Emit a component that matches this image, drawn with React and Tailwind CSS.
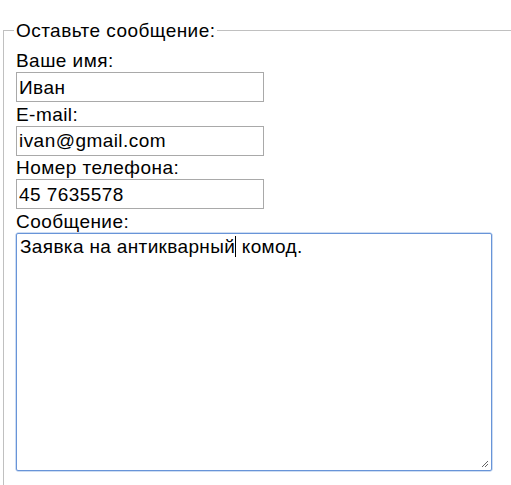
import React from "react";

const fields = [
  { label: "Ваше имя:", value: "Иван" },
  { label: "E-mail:", value: "ivan@gmail.com" },
  { label: "Номер телефона:", value: "45 7635578" },
];

const App = () => {
  return (
    <div className="w-[511px] h-[485px] overflow-hidden bg-white text-black text-[19px] leading-[21px] tracking-[0.45px] font-['Liberation_Sans',Arial,sans-serif]">
      <fieldset className="ml-[3px] mt-[20px] w-[530px] border border-[#c0c0c0] pl-[11px] pt-[9px] pb-[30px]">
        <legend className="h-[21px] leading-[21px] px-[2px] -ml-[1px]">Оставьте сообщение:</legend>
        <div className="flex flex-col pl-[1px]">
          {fields.map((f) => (
            <div key={f.label} className="flex flex-col">
              <label className="h-[21px]">{f.label}</label>
              <input
                type="text"
                defaultValue={f.value}
                className="mt-[1px] mb-[1.5px] w-[248px] h-[30px] border border-[#a9a9a9] px-[2px] pt-[1px] outline-none"
              />
            </div>
          ))}
          <label className="h-[21px]">Сообщение:</label>
          <div
            role="textbox"
            className="relative mt-[1px] w-[476px] h-[238px] border border-[#6894d8] rounded-[2px] shadow-[0_0_0_0.5px_#9dbbe6] p-[2px] pl-[3px] tracking-[0.35px]"
          >
            <span>Заявка на антикварный</span>
            <span className="inline-block w-px h-[21px] align-top bg-black"></span>
            <span> комод.</span>
            <svg className="absolute right-[2px] bottom-[2px]" width="10" height="10" viewBox="0 0 10 10">
              <path d="M9 3 L3 9 M9 6 L6 9" stroke="#666" strokeWidth="1" />
            </svg>
          </div>
        </div>
      </fieldset>
    </div>
  );
};

export default App;
